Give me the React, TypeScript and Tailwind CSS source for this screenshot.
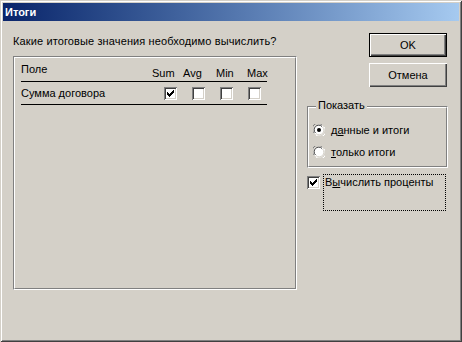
import React from "react";

const Check = () => (
  <svg width="13" height="13" viewBox="0 0 13 13" shapeRendering="crispEdges" className="block">
    {[
      [3, 5],
      [4, 6],
      [5, 7],
      [6, 6],
      [7, 5],
      [8, 4],
      [9, 3],
    ].map(([x, y]) => (
      <rect key={x} x={x} y={y} width="1" height="3" fill="#000" />
    ))}
  </svg>
);

const CheckBox = ({ checked = false }: { checked?: boolean }) => (
  <div className="w-[13px] h-[13px] shrink-0 bg-white shadow-[inset_1px_1px_#808080,inset_-1px_-1px_#ffffff,inset_2px_2px_#404040,inset_-2px_-2px_#d4d0c8]">
    {checked && <Check />}
  </div>
);

const Radio = ({ checked = false }: { checked?: boolean }) => (
  <svg width="12" height="12" viewBox="0 0 12 12" className="block shrink-0">
    <circle cx="6" cy="6" r="5.5" fill="#ffffff" />
    <path d="M1.5 9.5 A5.5 5.5 0 0 1 9.5 1.5" fill="none" stroke="#808080" strokeWidth="1" transform="translate(-0.6,-0.6)" />
    <path d="M2.5 9 A4.5 4.5 0 0 1 9 2.5" fill="none" stroke="#404040" strokeWidth="1" />
    <path d="M10.5 2.5 A5.5 5.5 0 0 1 2.5 10.5" fill="none" stroke="#ffffff" strokeWidth="1" transform="translate(0.6,0.6)" />
    <path d="M9.5 3 A4.5 4.5 0 0 1 3 9.5" fill="none" stroke="#d4d0c8" strokeWidth="1" />
    {checked && <circle cx="6" cy="6" r="2" fill="#000" />}
  </svg>
);

export default function App() {
  return (
    <div className="w-[462px] h-[342px] bg-[#d4d0c8] p-[3px] flex flex-col text-black text-[11px] leading-[13px] font-['Liberation_Sans',Arial,sans-serif] shadow-[inset_1px_1px_#d4d0c8,inset_-1px_-1px_#404040,inset_2px_2px_#ffffff,inset_-2px_-2px_#808080]">
      <div className="h-[18px] shrink-0 bg-linear-to-r from-[#0a246a] to-[#a6caf0] flex items-center pl-[2px] text-white font-bold">
        Итоги
      </div>
      <div className="flex flex-1 pl-[10px] pt-[12px]">
        <div className="w-[284px] flex flex-col pt-[2px]">
          <div className="tracking-[0.12px]">Какие итоговые значения необходимо вычислить?</div>
          <div className="mt-[8px] w-[284px] h-[234px] border border-t-[#808080] border-l-[#808080] border-b-white border-r-white">
            <div className="w-full h-full border border-t-white border-l-white border-b-[#808080] border-r-[#808080] pl-[6px] pt-[5px]">
              <div className="flex items-end h-[18px] pb-[2px]">
                <div className="w-[131px] self-start">Поле</div>
                <div className="w-[31px] leading-[12px]">Sum</div>
                <div className="w-[33px] leading-[12px]">Avg</div>
                <div className="w-[31px] leading-[12px]">Min</div>
                <div className="leading-[12px]">Max</div>
              </div>
              <div className="w-[246px] h-px bg-black" />
              <div className="flex items-center h-[22px]">
                <div className="w-[143px]">Сумма договора</div>
                <div className="flex gap-[15px]">
                  <CheckBox checked />
                  <CheckBox />
                  <CheckBox />
                  <CheckBox />
                </div>
              </div>
              <div className="w-[246px] h-px bg-black" />
            </div>
          </div>
        </div>
        <div className="ml-[10px] w-[141px] flex flex-col">
          <div className="ml-[62px] w-[78px] h-[24px] border border-black flex items-center justify-center shadow-[inset_1px_1px_#ffffff,inset_-1px_-1px_#404040,inset_-2px_-2px_#808080]">
            OK
          </div>
          <div className="mt-[6px] ml-[62px] w-[78px] h-[24px] flex items-center justify-center shadow-[inset_1px_1px_#ffffff,inset_-1px_-1px_#404040,inset_-2px_-2px_#808080]">
            Отмена
          </div>
          <div className="relative mt-[19px] w-[141px] h-[62px] border border-t-[#808080] border-l-[#808080] border-b-white border-r-white">
            <div className="w-full h-full border border-t-white border-l-white border-b-[#808080] border-r-[#808080] pl-[4px] pt-[11px]">
              <div className="flex items-center h-[22px]">
                <Radio checked />
                <span className="ml-[6px]">
                  д<span className="underline">а</span>нные и итоги
                </span>
              </div>
              <div className="flex items-center h-[22px]">
                <Radio />
                <span className="ml-[6px]">
                  <span className="underline">т</span>олько итоги
                </span>
              </div>
            </div>
            <div className="absolute left-[8px] top-[-8px] px-[2px] bg-[#d4d0c8]">Показать</div>
          </div>
          <div className="flex items-start mt-[8px]">
            <CheckBox checked />
            <div className="ml-[3px] mt-[-2px] w-[123px] h-[37px] border border-dotted border-black pl-[1px] pt-[1px]">
              В<span className="underline">ы</span>числить проценты
            </div>
          </div>
        </div>
      </div>
    </div>
  );
}
